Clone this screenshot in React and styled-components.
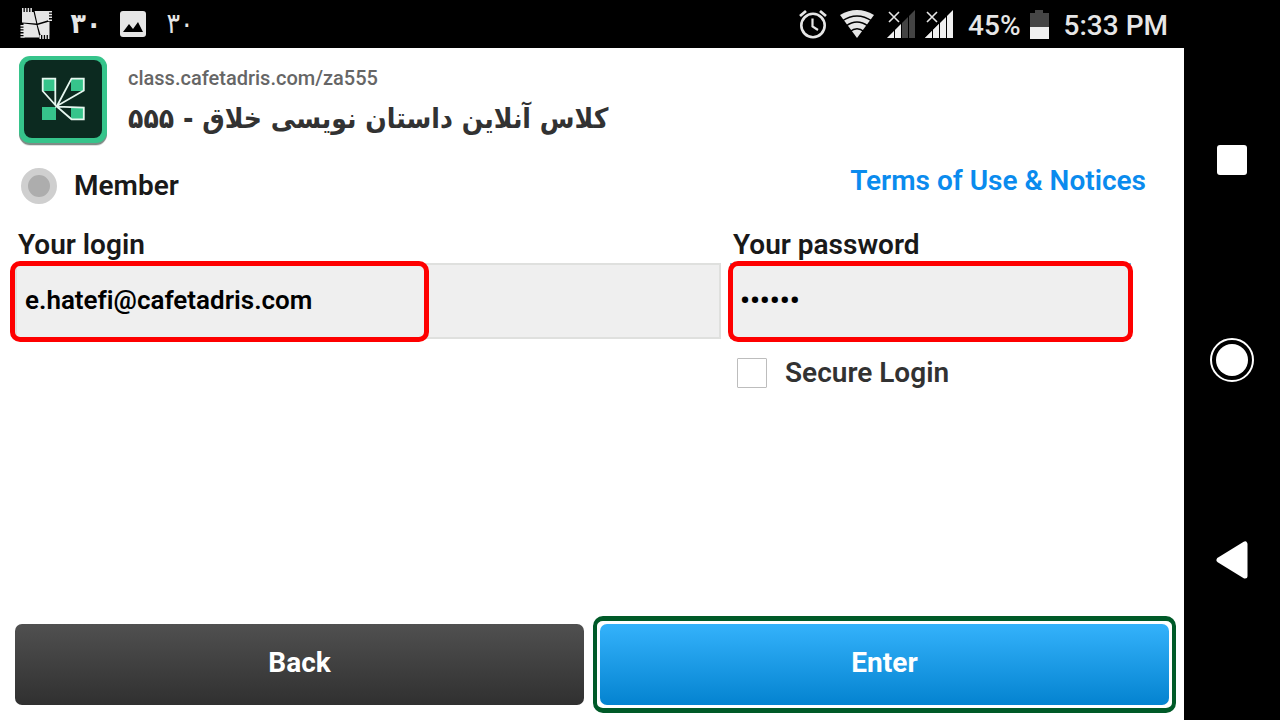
import React from "react";
import styled, { createGlobalStyle } from "styled-components";

const GlobalStyle = createGlobalStyle`
  *, *::before, *::after { box-sizing: border-box; }
  body { margin: 0; background: #fff; font-family: Roboto, "DejaVu Sans", sans-serif; }
  button, input { font: inherit; }
`;

const Device = styled.div`
  display: flex;
  min-height: 100vh;
`;

const Screen = styled.div`
  flex: 1;
  min-width: 0;
  display: flex;
  flex-direction: column;
`;

const StatusBar = styled.header`
  height: 48px;
  padding: 0 16px 0 20px;
  display: flex;
  align-items: center;
  justify-content: space-between;
  background: #000;
  color: #e6e6e6;
  font-size: 28px;
  font-weight: 500;
  line-height: 32px;
  white-space: nowrap;
`;

const StatusGroup = styled.div`
  display: flex;
  align-items: center;
  gap: ${(p) => p.$gap}px;
  svg { display: block; }
`;

const StatusText = styled.span`
  padding-top: 4px;
`;

const Badge = styled.span`
  min-width: 32px;
  font-family: "DejaVu Sans Condensed", "DejaVu Sans", sans-serif;
  font-size: 28px;
  font-weight: ${(p) => (p.$strong ? 700 : 400)};
  text-align: center;
`;

const Page = styled.main`
  flex: 1;
  display: flex;
  flex-direction: column;
`;

const Meeting = styled.section`
  display: flex;
  align-items: flex-start;
  gap: 20px;
  padding: 6px 18px 0;
`;

const MeetingText = styled.div`
  padding-top: 12px;
`;

const Address = styled.p`
  margin: 0;
  color: #666;
  font-size: 20px;
  font-weight: 500;
  line-height: 24px;
`;

const Title = styled.h1`
  margin: 0;
  color: #323232;
  font-family: "DejaVu Sans Condensed", "DejaVu Sans", sans-serif;
  font-size: 28px;
  font-weight: 700;
  line-height: 58px;
  white-space: nowrap;
`;

const RoleRow = styled.div`
  display: flex;
  align-items: flex-start;
  justify-content: space-between;
  padding: 20px 38px 0 21px;
`;

const Choice = styled.label`
  display: flex;
  align-items: center;
  gap: ${(p) => p.$gap}px;
  color: ${(p) => p.$color};
  font-size: 28px;
  font-weight: 600;
  line-height: 36px;
`;

const Radio = styled.input`
  appearance: none;
  width: 36px;
  height: 36px;
  margin: 0;
  border: 7px solid #cfcfcf;
  border-radius: 50%;
  background: #adadad;
`;

const Checkbox = styled.input`
  appearance: none;
  width: 30px;
  height: 30px;
  margin: 0;
  border: 1px solid #bdbdbd;
  border-radius: 1px;
  background: #fff;
`;

const TermsLink = styled.a`
  color: #0a8bee;
  font-size: 28px;
  font-weight: 600;
  line-height: 26px;
  text-decoration: none;
`;

const Fields = styled.div`
  display: grid;
  grid-template-columns: 706fr 401fr;
  column-gap: 9px;
  padding: 23px 53px 0 15px;
`;

const Label = styled.label`
  display: block;
  padding-left: 3px;
  color: #191919;
  font-size: 28px;
  font-weight: 600;
  line-height: 36px;
`;

const InputWrap = styled.div`
  position: relative;
`;

const TextInput = styled.input`
  display: block;
  width: 100%;
  height: 76px;
  margin: 0;
  padding: 0 8px 2px;
  border: 2px solid ${(p) => (p.$active ? "#6cb8e6" : "#dfe0de")};
  border-radius: 0;
  outline: none;
  background: #efefef;
  color: #000;
  font-size: ${(p) => (p.type === "password" ? 28 : 26)}px;
  font-weight: 600;
  font-variant-ligatures: none;
`;

const Highlight = styled.span`
  position: absolute;
  top: -2px;
  bottom: -3px;
  left: ${(p) => p.$left}px;
  width: ${(p) => p.$width};
  border: 5px solid #fe0000;
  border-radius: 10px;
  pointer-events: none;
`;

const SecureRow = styled.div`
  padding: 16px 0 0 7px;
`;

const Actions = styled.footer`
  display: grid;
  grid-template-columns: 569fr 583fr;
  align-items: center;
  column-gap: 9px;
  margin-top: auto;
  padding: 0 8px 7px 15px;
`;

const Button = styled.button`
  display: block;
  width: 100%;
  height: 81px;
  padding: 0 0 5px;
  border: 0;
  border-radius: 7px;
  background: linear-gradient(${(p) => (p.$primary ? "#34b2fb, #0483d0" : "#505050, #303030")});
  color: #fff;
  font-size: 28px;
  font-weight: 700;
`;

const Frame = styled.div`
  padding: 3px;
  border: 5px solid #005a28;
  border-width: 5px 4px;
  border-radius: 10px;
`;

const NavBar = styled.nav`
  width: 96px;
  padding: 60px 0;
  display: flex;
  flex-direction: column;
  align-items: center;
  justify-content: space-around;
  background: #000;
`;

const NavButton = styled.button`
  display: flex;
  align-items: center;
  justify-content: center;
  width: 64px;
  height: 64px;
  padding: 0;
  border: 0;
  background: none;
`;

const ConnectLogo = () => (
  <svg width="90" height="92" viewBox="18 54 90 92" aria-hidden="true">
    <rect x="19" y="58" width="88" height="88" rx="11" fill="#000" opacity=".12" />
    <rect x="19" y="57" width="88" height="88" rx="11" fill="#5d7068" opacity=".75" />
    <rect x="19" y="56" width="88" height="87" rx="11" fill="#36c48b" />
    <rect x="24" y="60" width="78" height="78" rx="8" fill="#0c2a20" />
    <g fill="#36c48b">
      <path d="M42 78h14v13H42zM71 78h13v13H71zM42 107h14v13H42zM71 107h13v13H71z" />
    </g>
    <g fill="none" stroke="#e6f7ef" strokeWidth="1.8">
      <path d="M42.7 78.7H55.3V105L42.7 91ZM71.5 78.7H83.8V90.5L57 106ZM57 106.7L83.8 107.5V119.3H71.5Z" />
    </g>
  </svg>
);

const ClassIcon = () => (
  <svg width="32" height="32" viewBox="0 0 32 32" fill="#e6e6e6" aria-hidden="true">
    <path d="M2 4H13.6L16.3 15.6L2 14.4ZM14.6 3H29V12L17.4 15.6ZM17.6 17L29.5 13.6V27H20.6ZM3.5 15.6L16.6 17L19.6 29.5H3.5Z" />
    <g fill="none" stroke="#e6e6e6" strokeWidth="4" strokeDasharray="1.5 1.3">
      <path d="M2 2H13" />
      <path d="M30 3V13" />
      <path d="M19.5 29H30" />
      <path d="M2.5 17V30" />
    </g>
  </svg>
);

const PictureIcon = () => (
  <svg width="26" height="26" viewBox="0 0 26 26" aria-hidden="true">
    <rect width="26" height="26" rx="3" fill="#e6e6e6" />
    <path d="M3 21l6-8 4 5 5-7 5 10z" fill="#000" />
  </svg>
);

const AlarmIcon = () => (
  <svg width="28" height="30" viewBox="0 0 28 30" fill="none" stroke="#e6e6e6" aria-hidden="true">
    <circle cx="14" cy="16.5" r="11.7" strokeWidth="2.6" />
    <path d="M13.5 9.5v8l5.5 3.5" strokeWidth="2.2" />
    <path d="M1 7l6-5M27 7l-6-5" strokeWidth="2.8" />
  </svg>
);

const WifiIcon = () => (
  <svg width="36" height="28" viewBox="0 0 36 28" aria-hidden="true">
    <path d="M1 5Q18-5 35 5L18 28z" fill="#e6e6e6" />
    <path d="M3 11Q18 1 33 11M7 16Q18 8 29 16M11 21.5Q18 16 25 21.5" fill="none" stroke="#000" strokeWidth="1.5" />
  </svg>
);

const SignalIcon = ({ strong }) => (
  <svg width="28" height="28" viewBox="0 0 28 28" aria-hidden="true">
    <path d="M0 28L28 0V28z" fill={strong ? "#f0f0f0" : "#444"} />
    <path d="M0 28L14 14V28z" fill="#f0f0f0" />
    <path d="M7.5 18v10M14.5 12v16M21.5 5v23" stroke="#000" strokeWidth="1" />
    <path d="M2 2l10 10M12 2L2 12" stroke="#e6e6e6" strokeWidth="1.6" />
  </svg>
);

const BatteryIcon = () => (
  <svg width="19" height="29" viewBox="0 0 19 29" aria-hidden="true">
    <path d="M0 3h5V0h8v3h6v14H0z" fill="#464646" />
    <path d="M0 17h19v12H0z" fill="#f0f0f0" />
  </svg>
);

export default function App() {
  return (
    <>
      <GlobalStyle />
      <Device>
        <Screen>
          <StatusBar>
            <StatusGroup $gap={18}>
              <ClassIcon />
              <Badge $strong>۳۰</Badge>
              <PictureIcon />
              <Badge>۳۰</Badge>
            </StatusGroup>
            <StatusGroup $gap={15}>
              <StatusGroup $gap={12}>
                <AlarmIcon />
                <WifiIcon />
                <StatusGroup $gap={10}>
                  <SignalIcon />
                  <SignalIcon strong />
                </StatusGroup>
              </StatusGroup>
              <StatusGroup $gap={9}>
                <StatusText>45%</StatusText>
                <BatteryIcon />
              </StatusGroup>
              <StatusText>5:33 PM</StatusText>
            </StatusGroup>
          </StatusBar>
          <Page>
            <Meeting>
              <ConnectLogo />
              <MeetingText>
                <Address>class.cafetadris.com/za555</Address>
                <Title dir="rtl" lang="fa">کلاس آنلاین داستان نویسی خلاق - ۵۵۵</Title>
              </MeetingText>
            </Meeting>
            <RoleRow>
              <Choice $gap={17} $color="#191919">
                <Radio type="radio" name="role" />
                Member
              </Choice>
              <TermsLink href="#terms">Terms of Use &amp; Notices</TermsLink>
            </RoleRow>
            <Fields>
              <div>
                <Label htmlFor="login">Your login</Label>
                <InputWrap>
                  <TextInput id="login" type="text" defaultValue="e.hatefi@cafetadris.com" />
                  <Highlight $left={-5} $width="419px" />
                </InputWrap>
              </div>
              <div>
                <Label htmlFor="password">Your password</Label>
                <InputWrap>
                  <TextInput id="password" type="password" defaultValue="123456" $active />
                  <Highlight $left={-2} $width="calc(100% + 4px)" />
                </InputWrap>
                <SecureRow>
                  <Choice $gap={18} $color="#323232">
                    <Checkbox type="checkbox" />
                    Secure Login
                  </Choice>
                </SecureRow>
              </div>
            </Fields>
            <Actions>
              <Button type="button">Back</Button>
              <Frame>
                <Button type="submit" $primary>Enter</Button>
              </Frame>
            </Actions>
          </Page>
        </Screen>
        <NavBar>
          <NavButton type="button" aria-label="Recent apps">
            <svg width="30" height="30"><rect width="30" height="30" rx="3" fill="#fff" /></svg>
          </NavButton>
          <NavButton type="button" aria-label="Home">
            <svg width="44" height="44" fill="#fff">
              <circle cx="22" cy="22" r="16" />
              <circle cx="22" cy="22" r="21" fill="none" stroke="#fff" strokeWidth="2" />
            </svg>
          </NavButton>
          <NavButton type="button" aria-label="Back">
            <svg width="32" height="38"><path d="M3 19L29 3V35Z" fill="#fff" stroke="#fff" strokeWidth="5" strokeLinejoin="round" /></svg>
          </NavButton>
        </NavBar>
      </Device>
    </>
  );
}
